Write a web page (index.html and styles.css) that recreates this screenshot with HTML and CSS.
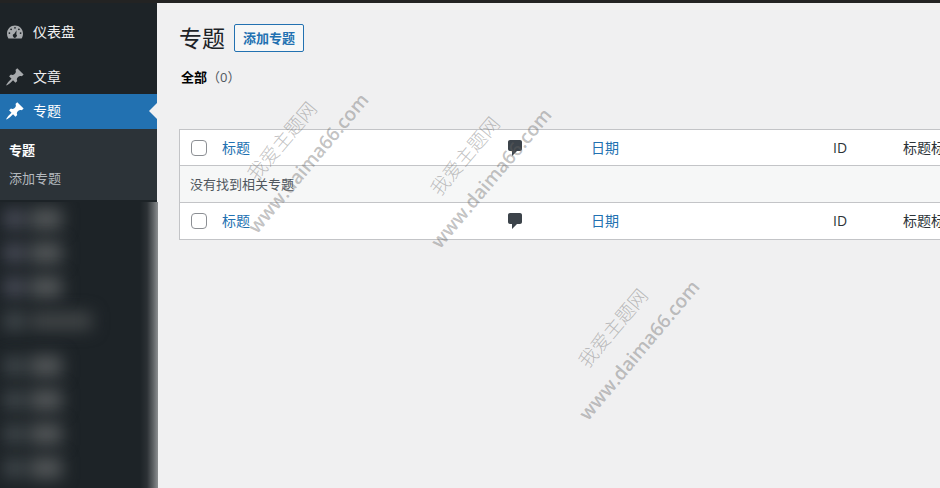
FILE: index.html
```html
<!DOCTYPE html>
<html lang="zh-CN">

<head>
    <meta charset="UTF-8">
    <title>专题</title>
    <link rel="stylesheet" href="styles.css">
</head>

<body>
    <svg class="sprite" aria-hidden="true">
        <symbol id="icon-dashboard" viewBox="0 0 20 20">
            <path fill-rule="evenodd" d="M3.400 16.500A8.200 8.200 0 0 1 2 11.500C2 7 5.600 3.500 10 3.500s8 3.500 8 8c0 1.900-.5 3.600-1.400 5zM10 4.900a.9.9 0 1 0 0 1.800.9.9 0 0 0 0-1.800zM6.100 6.400a.9.9 0 1 0 0 1.800.9.9 0 0 0 0-1.800zM13.900 6.400a.9.9 0 1 0 0 1.800.9.9 0 0 0 0-1.800zM4.400 10.200a.9.9 0 1 0 0 1.800.9.9 0 0 0 0-1.800zM15.600 10.200a.9.9 0 1 0 0 1.800.9.9 0 0 0 0-1.800zM11.600 8.300L9.300 11.800a2 2 0 1 0 2 .5z" />
        </symbol>
        <symbol id="icon-pin" viewBox="0 0 20 20">
            <path d="M10.44 3.02l1.82-1.82 6.36 6.35-1.83 1.82c-1.05-.68-2.48-.57-3.41.36l-.75.75c-.92.93-1.04 2.350-.35 3.410l-1.83 1.820-2.410-2.410-2.800 2.790c-.42.42-3.380 2.710-3.800 2.290s1.860-3.390 2.280-3.810l2.790-2.790L4.100 9.360l1.830-1.820c1.050.69 2.480.57 3.400-.36l.75-.75c.93-.92 1.050-2.350.36-3.410z" />
        </symbol>
        <symbol id="icon-comment" viewBox="0 0 20 20">
            <path d="M5 2h10c1.100 0 2 .9 2 2v7c0 1.100-.9 2-2 2h-3l-5 5v-5H5c-1.100 0-2-.9-2-2V4c0-1.100.9-2 2-2z" />
        </symbol>
    </svg>

    <div class="adminbar"></div>
    <div class="wrap">
        <aside class="sidebar">
            <nav class="menu">
                <a class="menu-item" href="#"><svg class="icon"><use href="#icon-dashboard" /></svg>仪表盘</a>
                <a class="menu-item after-gap" href="#"><svg class="icon"><use href="#icon-pin" /></svg>文章</a>
                <a class="menu-item current" href="#"><svg class="icon"><use href="#icon-pin" /></svg>专题</a>
                <div class="submenu">
                    <a class="current" href="#">专题</a>
                    <a href="#">添加专题</a>
                </div>
            </nav>
            <div class="hidden-menu" aria-hidden="true">
                <div class="row warm"><i></i><b></b></div>
                <div class="row warm"><i></i><b></b></div>
                <div class="row warm"><i></i><b></b></div>
                <div class="row"><i></i><b class="long"></b></div>
                <div class="row after-gap"><i></i><b></b></div>
                <div class="row"><i></i><b></b></div>
                <div class="row"><i></i><b></b></div>
                <div class="row"><i></i><b></b></div>
            </div>
        </aside>

        <main class="content">
            <div class="heading">
                <h1>专题</h1>
                <a class="add-button" href="#">添加专题</a>
            </div>
            <div class="filters"><a href="#">全部</a><span>（0）</span></div>

            <table class="list">
                <colgroup>
                    <col class="col-check">
                    <col class="col-title">
                    <col class="col-comments">
                    <col class="col-date">
                    <col class="col-id">
                    <col>
                </colgroup>
                <thead>
                    <tr>
                        <th><input type="checkbox" aria-label="全选"></th>
                        <th><a href="#">标题</a></th>
                        <th><svg class="icon" role="img" aria-label="评论"><use href="#icon-comment" /></svg></th>
                        <th><a href="#">日期</a></th>
                        <th>ID</th>
                        <th>标题标签</th>
                    </tr>
                </thead>
                <tbody>
                    <tr>
                        <td colspan="6">没有找到相关专题</td>
                    </tr>
                </tbody>
                <tfoot>
                    <tr>
                        <th><input type="checkbox" aria-label="全选"></th>
                        <th><a href="#">标题</a></th>
                        <th><svg class="icon" role="img" aria-label="评论"><use href="#icon-comment" /></svg></th>
                        <th><a href="#">日期</a></th>
                        <th>ID</th>
                        <th>标题标签</th>
                    </tr>
                </tfoot>
            </table>
        </main>
    </div>

    <div class="watermark first"><span>我爱主题网</span><b>www.daima66.com</b></div>
    <div class="watermark second"><span>我爱主题网</span><b>www.daima66.com</b></div>
    <div class="watermark third"><span>我爱主题网</span><b>www.daima66.com</b></div>
</body>

</html>
```
FILE: styles.css
```css
* {
    box-sizing: border-box;
}

body {
    margin: 0;
    min-height: 100vh;
    display: flex;
    flex-direction: column;
    position: relative;
    overflow: hidden;
    background-color: #f0f0f1;
    color: #2c3338;
    font-family: "Open Sans", "Noto Sans CJK SC", sans-serif;
    font-size: 14px;
    line-height: 18px;
}

a {
    color: #2271b1;
    text-decoration: none;
}

.sprite {
    display: none;
}

.icon {
    width: 20px;
    height: 20px;
    fill: currentColor;
}

.adminbar {
    height: 3px;
    background-color: #232323;
}

.wrap {
    display: flex;
    flex: 1;
}

/* sidebar */

.sidebar {
    width: 158px;
    flex-shrink: 0;
    display: flex;
    flex-direction: column;
}

.menu {
    width: 157px;
    padding-top: 12px;
    padding-bottom: 2px;
    background-color: #1d2327;
}

.menu-item {
    display: flex;
    align-items: center;
    gap: 8px;
    height: 34px;
    padding-left: 5px;
    color: #f0f0f1;
}

.menu-item .icon {
    color: #a7aaad;
}

.after-gap {
    margin-top: 11px;
}

.menu-item.current {
    height: 35px;
    padding-bottom: 1px;
    color: #fff;
    background-color: #2271b1;
}

.menu-item.current .icon {
    color: #fff;
}

.menu-item.current::after {
    content: "";
    margin-left: auto;
    border: 8px solid transparent;
    border-left: 0;
    border-right-color: #f0f0f1;
}

.submenu {
    padding: 7px 9px 8px;
    background-color: #2c3338;
    font-size: 13px;
}

.submenu a {
    display: block;
    padding: 5px 0;
    color: #b4b9be;
}

.submenu .current {
    color: #fff;
    font-weight: 700;
}

.hidden-menu {
    flex: 1;
    overflow: hidden;
    background: linear-gradient(to left, #8c8f91, #5c6063 5px, #2c3135 11px, #1d2327 18px);
}

.row {
    display: flex;
    align-items: center;
    gap: 6px;
    height: 34px;
    padding-left: 4px;
    filter: blur(8px);
}

.row i {
    width: 20px;
    height: 20px;
    background-color: #3f464a;
}

.row b {
    width: 32px;
    height: 22px;
    background-color: #505456;
}

.row.warm i {
    background-color: #474a56;
}

.row .long {
    width: 62px;
    height: 18px;
    background-color: #414547;
}

/* content */

.content {
    flex: 1;
    min-width: 0;
    padding: 20px 0 0 21px;
}

.heading {
    display: flex;
    align-items: center;
    gap: 9px;
    height: 30px;
}

h1 {
    margin: 0;
    color: #1d2327;
    font-size: 23px;
    font-weight: 400;
    line-height: 30px;
}

.add-button {
    padding: 4px 8px;
    border: 1px solid #2271b1;
    border-radius: 2px;
    background-color: #f6f7f7;
    font-size: 13px;
    font-weight: 700;
}

.filters {
    padding: 15px 0 43px 2px;
    color: #50575e;
    font-size: 13px;
}

.filters a {
    color: #000;
    font-weight: 700;
}

/* the list is wider than the window, its last column runs off the side */
.list {
    width: calc(100% + 120px);
    table-layout: fixed;
    border: 1px solid #c3c4c7;
    border-spacing: 0;
    background-color: #fff;
}

.col-check {
    width: 32px;
}

.col-title {
    width: 286px;
}

.col-comments {
    width: 83px;
}

.col-date {
    width: 242px;
}

.col-id {
    width: 70px;
}

.list th,
.list td {
    height: 36px;
    padding: 0 10px;
    font-weight: 400;
    text-align: left;
    white-space: nowrap;
}

.list thead th {
    height: 35px;
}

.list td {
    height: 38px;
    border: 1px solid #c3c4c7;
    border-width: 1px 0;
    background-color: #f6f7f7;
    color: #50575e;
    font-size: 13px;
}

.list .icon {
    display: block;
    margin-left: -3px;
    color: #3c434a;
}

input {
    appearance: none;
    display: block;
    width: 16px;
    height: 16px;
    margin: 0 0 0 1px;
    border: 1px solid #8c8f94;
    border-radius: 4px;
    background-color: #fff;
}

/* watermark */

.watermark {
    position: absolute;
    width: 180px;
    color: rgba(100, 100, 100, 0.4);
    text-align: center;
    line-height: 34px;
    transform: rotate(-50deg);
    pointer-events: none;
}

.watermark span,
.watermark b {
    display: block;
}

.watermark span {
    font-size: 19px;
    font-weight: 300;
}

.watermark b {
    font-size: 19px;
    font-weight: 600;
}

.first {
    left: 205px;
    top: 118px;
}

.second {
    left: 388px;
    top: 133px;
}

.third {
    left: 536px;
    top: 305px;
}
```
